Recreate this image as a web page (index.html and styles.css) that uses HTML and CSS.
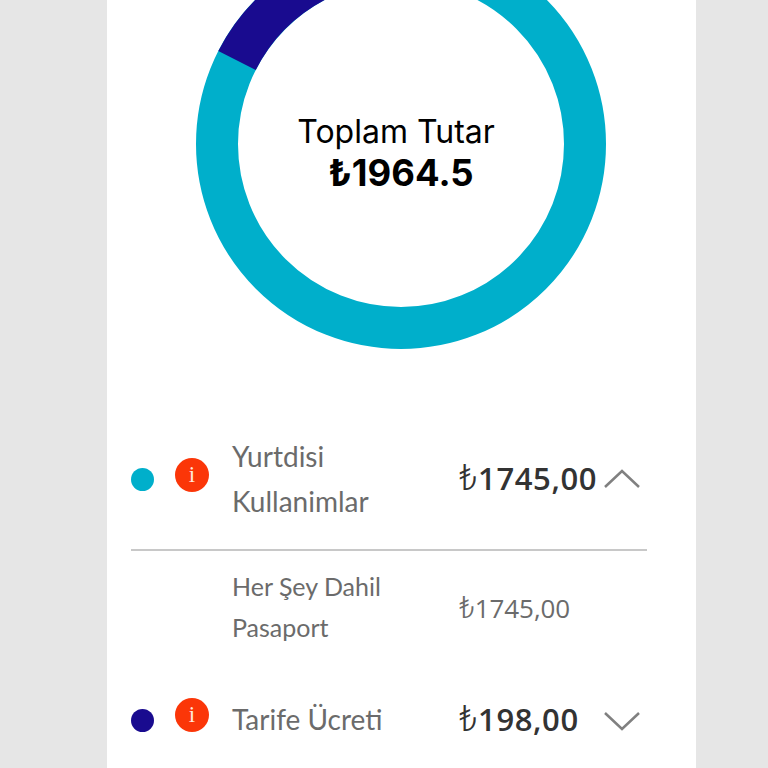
FILE: index.html
```html
<!DOCTYPE html>
<html lang="en">
<head>
    <meta charset="UTF-8">
    <meta name="viewport" content="width=device-width, initial-scale=1.0">
    <title>Fatura Detayi</title>
    <link rel="stylesheet" href="styles.css">
</head>
<body>

<div class="card">
    <!-- Donut chart -->
    <div class="chart">
        <svg class="donut" width="410" height="410" viewBox="0 0 410 410">
            <circle class="ring-cyan" cx="205" cy="205" r="184"></circle>
            <circle class="ring-navy" cx="205" cy="205" r="184" pathLength="360" stroke-dasharray="36 324" stroke-dashoffset="63" transform="rotate(-90 205 205)"></circle>
        </svg>
        <div class="chart-label">
            <div class="chart-title">Toplam Tutar</div>
            <div class="chart-total">₺1964.5</div>
        </div>
    </div>

    <!-- Invoice rows -->
    <div class="row row-main row-first">
        <span class="dot dot-cyan"></span>
        <span class="info">i</span>
        <span class="name">Yurtdisi Kullanimlar</span>
        <span class="amount"><span class="lira">₺</span>1745,00</span>
        <svg class="chevron" width="38" height="20" viewBox="0 0 38 20"><path d="M2 18 L19 2 L36 18"></path></svg>
    </div>
    <div class="row row-sub">
        <span class="name name-sub">Her Şey Dahil Pasaport</span>
        <span class="amount amount-sub"><span class="lira">₺</span>1745,00</span>
    </div>
    <div class="row row-main row-last">
        <span class="dot dot-navy"></span>
        <span class="info">i</span>
        <span class="name">Tarife Ücreti</span>
        <span class="amount"><span class="lira">₺</span>198,00</span>
        <svg class="chevron chevron-down" width="38" height="20" viewBox="0 0 38 20"><path d="M2 2 L19 18 L36 2"></path></svg>
    </div>
</div>

</body>
</html>
```

FILE: styles.css
```css
/* General styling */
html, body {
    height: 100%;
}

body {
    margin: 0;
    background-color: #e6e6e6;
    font-family: 'Lato', sans-serif;
    overflow: hidden;
}

.card {
    width: 589px;
    height: 768px;
    margin-left: 107px;
    background-color: #fff;
    overflow: hidden;
}

/* Donut chart */
.chart {
    position: relative;
    width: 410px;
    height: 410px;
    margin: -61px 0 0 89px;
}

.donut {
    display: block;
}

.donut circle {
    fill: none;
    stroke-width: 42;
}

.ring-cyan {
    stroke: #00afcb;
}

.ring-navy {
    stroke: #190b8f;
}

.chart-label {
    position: absolute;
    top: 172px;
    left: 0;
    width: 400px;
    text-align: center;
    color: #000;
}

.chart-title {
    font-family: 'Inter', sans-serif;
    font-size: 32px;
    line-height: 42px;
}

.chart-total {
    padding-left: 10px;
    font-family: 'Inter', 'DejaVu Sans', sans-serif;
    font-size: 36.5px;
    font-weight: 700;
    line-height: 40px;
}

/* Invoice rows */
.row {
    display: flex;
    align-items: center;
    margin: 0 49px 0 24px;
}

.row-first {
    margin-top: 61px;
    height: 141px;
    border-bottom: 2px solid #c8c8c8;
    box-sizing: border-box;
}

.row-sub {
    height: 114px;
}

.row-last {
    height: 110px;
}

.dot {
    width: 23px;
    height: 23px;
    border-radius: 50%;
    flex-shrink: 0;
}

.dot-cyan {
    background-color: #00afcb;
}

.dot-navy {
    background-color: #190b8f;
}

.info {
    width: 34px;
    height: 34px;
    margin: -10px 0 0 21px;
    border-radius: 50%;
    background-color: #fb3608;
    color: #ffe9dc;
    font-family: 'Liberation Serif', serif;
    font-size: 23px;
    line-height: 34px;
    text-align: center;
    flex-shrink: 0;
}

.name {
    width: 180px;
    margin: -1px 0 0 23px;
    color: #6b6b6b;
    font-size: 28px;
    line-height: 45px;
    flex-shrink: 0;
}

.name-sub {
    margin: -2px 0 0 101px;
    font-size: 25px;
    line-height: 41px;
}

.amount {
    margin: -3px 0 0 47px;
    color: #333;
    font-family: 'Open Sans', 'DejaVu Sans', sans-serif;
    font-size: 31px;
    font-weight: 600;
    line-height: 40px;
    letter-spacing: 0.6px;
    white-space: nowrap;
}

.lira {
    font-family: 'Roboto', 'DejaVu Sans', sans-serif;
    font-size: 36px;
    font-weight: 300;
    line-height: 30px;
}

.amount-sub {
    margin-top: 0;
    color: #6b6b6b;
    font-size: 26px;
    font-weight: 400;
    letter-spacing: -0.1px;
}

.amount-sub .lira {
    font-size: 31px;
}

.chevron {
    margin: -1px 6px 0 auto;
    flex-shrink: 0;
}

.chevron-down {
    margin-top: 1px;
}

.chevron path {
    fill: none;
    stroke: #808080;
    stroke-width: 2.5;
}
```
